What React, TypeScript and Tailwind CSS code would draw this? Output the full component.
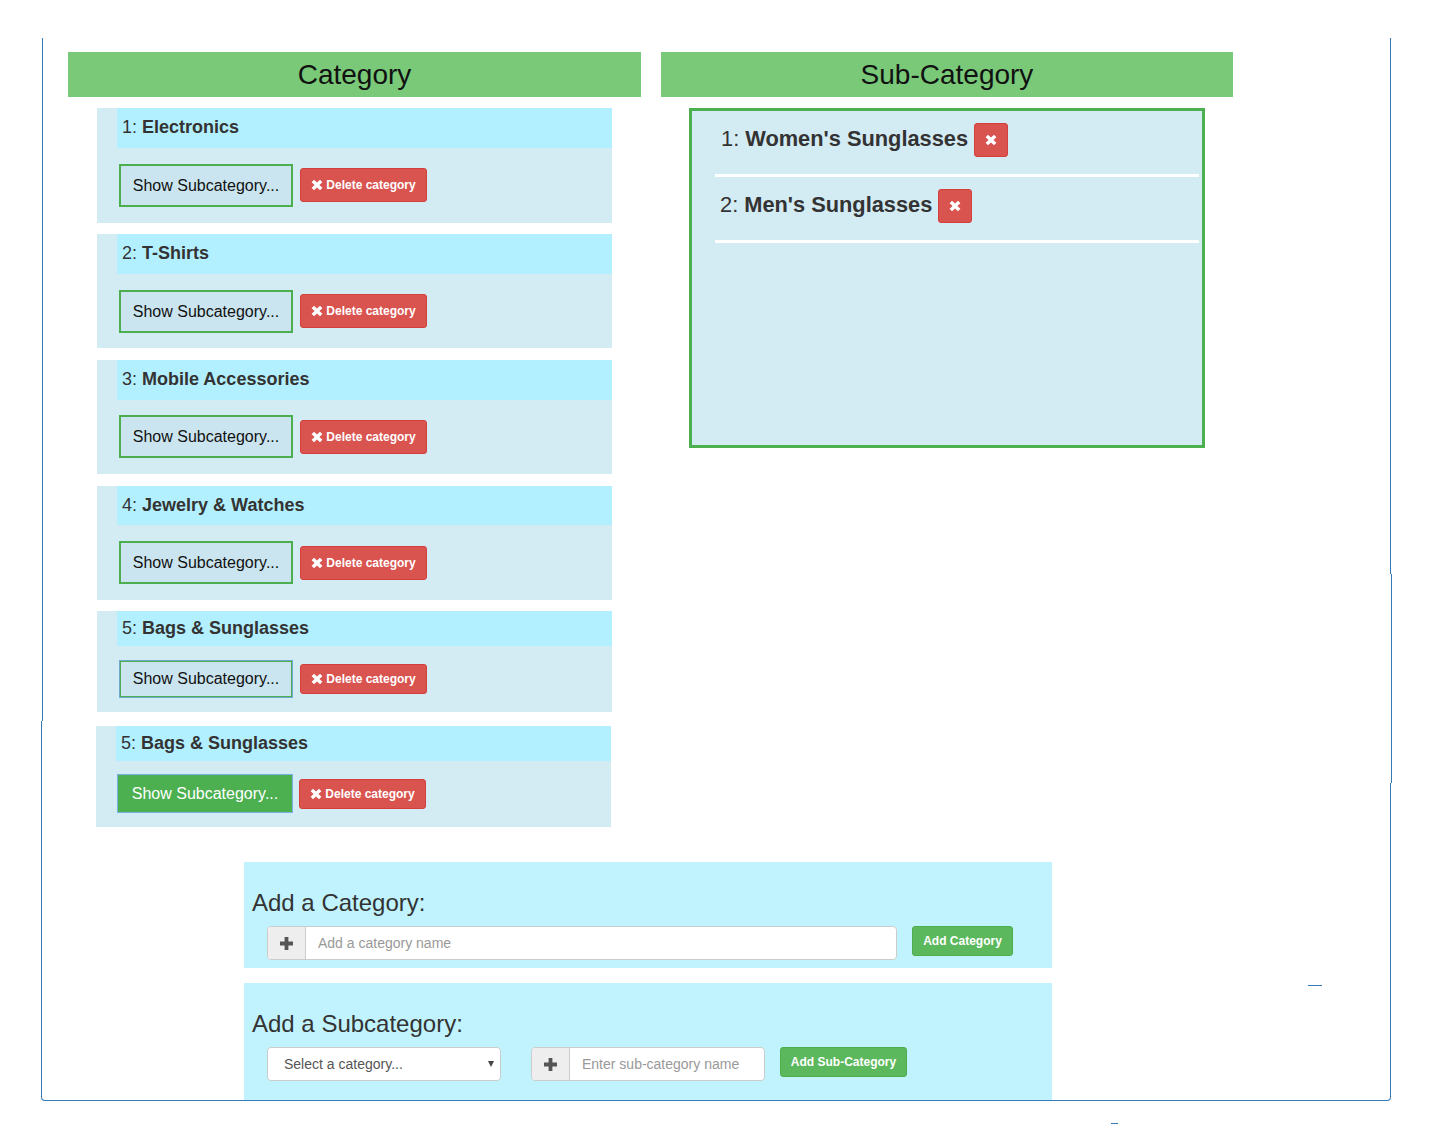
import React from "react";

const XIcon = ({ className }: { className: string }) => (
  <svg viewBox="0 0 12 12" className={className} fill="currentColor">
    <path d="M3 .8 6 3.600 9 .8 11.400 3.200 8.400 6l3 2.800L9 11.200 6 8.400 3 11.200.6 8.800 3.600 6 .6 3.200z" />
  </svg>
);

const PlusIcon = () => (
  <svg viewBox="0 0 12 12" className="w-[13px] h-[13px] text-[#555]" fill="currentColor">
    <path d="M4.250 0h3.500v4.250H12v3.500H7.750V12h-3.500V7.750H0v-3.500h4.250z" />
  </svg>
);

interface CategoryRow {
  num: number;
  name: string;
  card: string;
  header: string;
  buttons: string;
  show: string;
  del: string;
}

const categories: CategoryRow[] = [
  {
    num: 1,
    name: "Electronics",
    card: "ml-[29px] h-[115px]",
    header: "h-[40px] pb-[2px]",
    buttons: "mt-[16px]",
    show: "w-[174px] h-[43px] border-2 border-[#4cae4f] bg-[#cbe5f0] text-[#111]",
    del: "h-[34px] mb-px",
  },
  {
    num: 2,
    name: "T-Shirts",
    card: "ml-[29px] h-[114px] mt-[11px]",
    header: "h-[40px] pb-[2px]",
    buttons: "mt-[16px]",
    show: "w-[174px] h-[43px] border-2 border-[#4cae4f] bg-[#cbe5f0] text-[#111]",
    del: "h-[34px] mb-px",
  },
  {
    num: 3,
    name: "Mobile Accessories",
    card: "ml-[29px] h-[114px] mt-[12px]",
    header: "h-[40px] pb-[2px]",
    buttons: "mt-[15px]",
    show: "w-[174px] h-[43px] border-2 border-[#4cae4f] bg-[#cbe5f0] text-[#111]",
    del: "h-[34px]",
  },
  {
    num: 4,
    name: "Jewelry & Watches",
    card: "ml-[29px] h-[114px] mt-[12px]",
    header: "h-[39px]",
    buttons: "mt-[16px]",
    show: "w-[174px] h-[43px] border-2 border-[#4cae4f] bg-[#cbe5f0] text-[#111]",
    del: "h-[34px]",
  },
  {
    num: 5,
    name: "Bags & Sunglasses",
    card: "ml-[29px] h-[101px] mt-[11px]",
    header: "h-[35px]",
    buttons: "mt-[14px]",
    show: "w-[174px] h-[38px] border-2 border-[#4cae4f] bg-[#cbe5f0] text-[#111] outline outline-1 -outline-offset-1 outline-[#6fa9cf]",
    del: "h-[30px]",
  },
  {
    num: 5,
    name: "Bags & Sunglasses",
    card: "ml-[28px] h-[101px] mt-[14px]",
    header: "h-[35px]",
    buttons: "mt-[13px]",
    show: "w-[176px] -ml-px -mr-px h-[39px] border-2 border-[#4caf50] bg-[#4caf50] text-white outline outline-1 -outline-offset-1 outline-[#7aaee8]",
    del: "h-[30px]",
  },
];

const subCategories = [
  { num: 1, name: "Women's Sunglasses", text: "pl-[6px]" },
  { num: 2, name: "Men's Sunglasses", text: "pl-[5px]" },
];

const Category = ({ row }: { row: CategoryRow }) => (
  <div className={`w-[515px] bg-[#d3ebf3] ${row.card}`}>
    <div className={`ml-[20px] pl-[5px] bg-[#b3f0ff] flex items-center text-[18px] text-[#333] ${row.header}`}>
      <span>
        {row.num}: <b>{row.name}</b>
      </span>
    </div>
    <div className={`ml-[22px] flex items-center gap-[7px] ${row.buttons}`}>
      <button className={`flex items-center justify-center text-[16px] ${row.show}`}>
        Show Subcategory...
      </button>
      <button
        className={`w-[127px] rounded-[3px] border border-[#d43f3a] bg-[#d9534f] text-white text-[12px] font-bold flex items-center justify-center gap-[3px] ${row.del}`}
      >
        <XIcon className="w-[12px] h-[12px]" />
        Delete category
      </button>
    </div>
  </div>
);

export default function App() {
  return (
    <div className="relative h-[1133px] w-[1433px] overflow-hidden bg-white font-['Liberation_Sans',Arial,sans-serif]">
      <div className="relative ml-[41px] pt-[52px] w-[1350px] h-[1101px]">
        <div className="flex ml-[27px] gap-[20px] items-start">
          {/* Category column */}
          <div className="w-[573px]">
            <div className="h-[45px] bg-[#79c979] flex items-center justify-center text-[28px] text-[#111]">
              Category
            </div>
            <div className="mt-[11px]">
              {categories.map((row, i) => (
                <Category key={i} row={row} />
              ))}
            </div>
          </div>

          {/* Sub-category column */}
          <div className="w-[572px]">
            <div className="h-[45px] bg-[#79c979] flex items-center justify-center text-[28px] text-[#111]">
              Sub-Category
            </div>
            <div className="mt-[11px] ml-[28px] w-[516px] h-[340px] border-[3px] border-[#4caf50] bg-[#d3ebf3] pl-[23px] pr-[3px]">
              {subCategories.map((s) => (
                <div key={s.num} className="h-[66px] border-b-[3px] border-white pt-[12px]">
                  <div className={`flex items-start gap-[6px] text-[21.8px] text-[#333] ${s.text}`}>
                    <span className="h-[34px] leading-[32px]">
                      {s.num}: <b>{s.name}</b>
                    </span>
                    <button className="w-[34px] h-[34px] rounded-[3px] border border-[#d43f3a] bg-[#d9534f] text-white flex items-center justify-center">
                      <XIcon className="w-[12px] h-[12px]" />
                    </button>
                  </div>
                </div>
              ))}
            </div>
          </div>
        </div>

        {/* Add a category */}
        <div className="mt-[35px] ml-[203px] w-[808px] h-[106px] bg-[#c1f3ff] pt-[27px]">
          <div className="pl-[8px] h-[37px] text-[24px] leading-[27px] text-[#333]">Add a Category:</div>
          <div className="ml-[23px] flex items-start">
            <div className="w-[630px] h-[34px] flex rounded-[4px] border border-[#ccc] bg-white overflow-hidden">
              <span className="w-[38px] shrink-0 bg-[#eee] border-r border-[#ccc] flex items-center justify-center">
                <PlusIcon />
              </span>
              <input
                className="flex-1 px-[12px] text-[14px] text-[#555] placeholder:text-[#999] outline-none"
                placeholder="Add a category name"
              />
            </div>
            <button className="ml-[15px] w-[101px] h-[30px] rounded-[3px] border border-[#4cae4c] bg-[#5cb85c] text-white text-[12px] font-bold">
              Add Category
            </button>
          </div>
        </div>

        {/* Add a subcategory */}
        <div className="mt-[15px] ml-[203px] w-[808px] h-[117px] bg-[#c1f3ff] pt-[27px]">
          <div className="pl-[8px] h-[37px] text-[24px] leading-[27px] text-[#333]">Add a Subcategory:</div>
          <div className="ml-[23px] flex items-start">
            <div className="relative w-[234px] h-[34px]">
              <select className="w-full h-full appearance-none rounded-[4px] border border-[#ccc] bg-white pl-[16px] text-[14px] text-[#555] outline-none">
                <option>Select a category...</option>
              </select>
              <span className="absolute right-[7px] top-[14px] w-0 h-0 border-x-[3px] border-t-[6px] border-x-transparent border-t-[#444]" />
            </div>
            <div className="ml-[30px] w-[234px] h-[34px] flex rounded-[4px] border border-[#ccc] bg-white overflow-hidden">
              <span className="w-[38px] shrink-0 bg-[#eee] border-r border-[#ccc] flex items-center justify-center">
                <PlusIcon />
              </span>
              <input
                className="w-0 flex-1 px-[12px] text-[14px] text-[#555] placeholder:text-[#999] outline-none"
                placeholder="Enter sub-category name"
              />
            </div>
            <button className="ml-[15px] w-[127px] h-[30px] rounded-[3px] border border-[#4cae4c] bg-[#5cb85c] text-white text-[12px] font-bold">
              Add Sub-Category
            </button>
          </div>
        </div>
      </div>

      {/* panel frame, stitched from screenshots so its edges jump by a pixel */}
      <div className="absolute left-[42px] top-[38px] w-px h-[683px] bg-[#337ab7]" />
      <div className="absolute left-[1390px] top-[38px] w-px h-[536px] bg-[#337ab7]" />
      <div className="absolute left-[1391px] top-[574px] w-px h-[209px] bg-[#337ab7]" />
      <div className="absolute left-[41px] top-[721px] w-[1340px] h-[380px] border-l border-b border-[#337ab7] rounded-bl-[4px]" />
      <div className="absolute left-[1380px] top-[783px] w-[11px] h-[318px] border-r border-b border-[#337ab7] rounded-br-[4px]" />
      <div className="absolute left-[1308px] top-[985px] w-[14px] h-px bg-[#337ab7]" />
      <div className="absolute left-[1111px] top-[1123px] w-[7px] h-px bg-[#337ab7]" />
    </div>
  );
}
